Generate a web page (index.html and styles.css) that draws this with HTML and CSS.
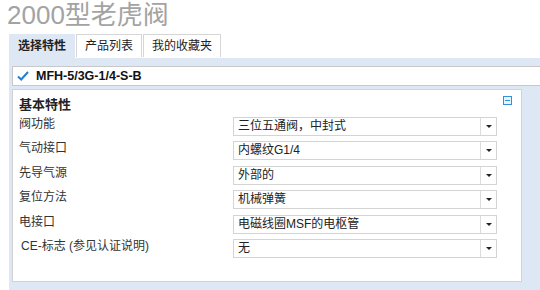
FILE: index.html
```html
<!DOCTYPE html>
<html>
<head>
<meta charset="utf-8">
<title>2000型老虎阀</title>
<link rel="stylesheet" href="styles.css">
</head>
<body>
<h1 class="title">2000型老虎阀</h1>

<div class="tabs">
	<div class="tab active">选择特性</div>
	<div class="tab">产品列表</div>
	<div class="tab">我的收藏夹</div>
</div>

<div class="tabpanel">
	<div class="partrow">
		<svg class="check" width="12" height="10" viewBox="0 0 12 10">
			<path d="M1 5.5 L4.2 8.5 L11 1" fill="none" stroke="#1f80d8" stroke-width="2"/>
		</svg>
		<span class="partno">MFH-5/3G-1/4-S-B</span>
	</div>

	<div class="props">
		<div class="propshead">
			<span>基本特性</span>
			<svg class="collapse" width="9" height="9" viewBox="0 0 9 9">
				<rect x="0.5" y="0.5" width="8" height="8" fill="#e8f3fc" stroke="#2a94e0"/>
				<line x1="2" y1="4.5" x2="7" y2="4.5" stroke="#2a94e0"/>
			</svg>
		</div>
		<div class="proplist">
			<div class="label">阀功能</div>
			<div class="dropdown"><span class="value">三位五通阀，中封式</span><span class="arrow"></span></div>

			<div class="label">气动接口</div>
			<div class="dropdown"><span class="value">内螺纹G1/4</span><span class="arrow"></span></div>

			<div class="label">先导气源</div>
			<div class="dropdown"><span class="value">外部的</span><span class="arrow"></span></div>

			<div class="label">复位方法</div>
			<div class="dropdown"><span class="value">机械弹簧</span><span class="arrow"></span></div>

			<div class="label">电接口</div>
			<div class="dropdown"><span class="value">电磁线圈MSF的电枢管</span><span class="arrow"></span></div>

			<div class="label ce">CE-标志 (参见认证说明)</div>
			<div class="dropdown"><span class="value">无</span><span class="arrow"></span></div>
		</div>
	</div>
</div>
</body>
</html>
```

FILE: styles.css
```css
body
{
	margin:0;
	font-family:"Liberation Sans", "Noto Sans CJK SC", sans-serif;
	font-size:12px;
	color:#333;
	background:#fff;
	overflow:hidden;
}
.title
{
	margin:0;
	padding:2px 0 0 7px;
	font-size:26px;
	line-height:26px;
	font-weight:normal;
	color:#a3a3a3;
}
.tabs
{
	display:flex;
	gap:1px;
	margin-top:6px;
	padding-left:9px;
}
.tab
{
	height:22px;
	line-height:22px;
	padding:0 8px;
	border:1px solid #d6d6d6;
	border-bottom:none;
	background:#fff;
	color:#222;
	font-size:12px;
}
.tab.active
{
	height:23px;
	border-color:#dde8f4;
	background:#dde8f4;
	font-weight:bold;
}
.tabpanel
{
	margin-left:9px;
	padding:8px 0 10px 3px;
	background:#dde8f4;
	height:214px;
}
.partrow
{
	display:flex;
	align-items:center;
	height:18px;
	border:1px solid #c8c8c8;
	border-right:none;
	background:#fff;
	padding-left:4px;
}
.check
{
	margin-right:7px;
}
.partno
{
	font-weight:bold;
	font-size:12.5px;
	color:#111;
}
.props
{
	margin-top:3px;
	margin-right:18px;
	height:191px;
	border:1px solid #d2d2d2;
	background:#fff;
	padding:0 0 0 6px;
}
.propshead
{
	display:flex;
	justify-content:space-between;
	align-items:center;
	height:20px;
	padding:3px 9px 0 0;
	font-size:13px;
	font-weight:bold;
	color:#222;
}
.collapse
{
	margin-top:-5px;
}
.proplist
{
	display:grid;
	grid-template-columns:214px 264px;
	row-gap:5.4px;
	margin-top:4px;
}
.label
{
	line-height:14px;
	color:#333;
}
.label.ce
{
	padding-left:2px;
}
.dropdown
{
	display:flex;
	height:17px;
	border:1px solid #d4d4d4;
	background:#fff;
}
.value
{
	flex:1;
	padding-left:4px;
	line-height:17px;
	color:#222;
}
.arrow
{
	width:15px;
	border-left:1px solid #dcdcdc;
	position:relative;
}
.arrow::after
{
	content:"";
	position:absolute;
	left:5px;
	top:7px;
	border-left:3px solid transparent;
	border-right:3px solid transparent;
	border-top:3px solid #222;
}
```
